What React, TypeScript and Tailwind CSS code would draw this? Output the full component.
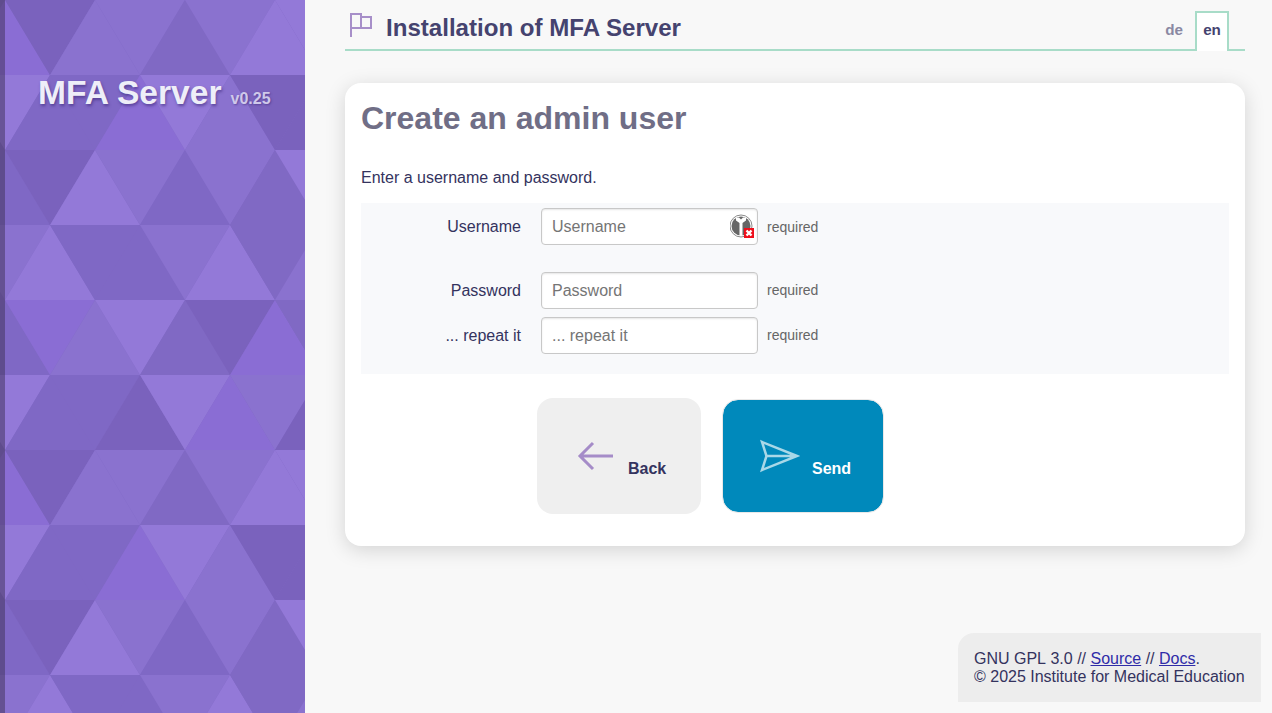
import React from 'react'

const FONT = "font-['Liberation_Sans',Arial,sans-serif]"

// colours of the background triangles
const A = '#7a62bd'
const B = '#7f68c5'
const C = '#8a72cf'
const D = '#9379d8'
const E = '#8a6dd4'
const F = '#8069c4'

// every row runs left to right, first triangle starts left of the page
const rows: string[][] = [
  [E, A, C, C, F, C, D, D],
  [D, B, B, E, D, C, A, A],
  [B, A, D, C, B, C, F, D],
  [C, D, B, B, C, D, F, C],
  [B, E, C, D, F, A, E, F],
  [D, B, B, A, D, E, C, A],
]

function triangles(offset: number) {
  const out: React.ReactNode[] = []
  rows.forEach((row, r) => {
    const top = offset + r * 75
    const bottom = top + 75
    const shift = r % 2 === 0 ? 5 : -40
    row.forEach((color, i) => {
      const n = Math.floor(i / 2)
      const x = shift + n * 90
      // even rows begin with an upward triangle, odd rows with a downward one
      const up = r % 2 === 0 ? i % 2 === 0 : i % 2 === 1
      let points = ''
      if (r % 2 === 0) {
        points = up
          ? `${x},${top} ${x - 45},${bottom} ${x + 45},${bottom}`
          : `${x},${top} ${x + 90},${top} ${x + 45},${bottom}`
      } else {
        points = up
          ? `${x + 90},${top} ${x + 45},${bottom} ${x + 135},${bottom}`
          : `${x},${top} ${x + 90},${top} ${x + 45},${bottom}`
      }
      out.push(<polygon key={`${offset}-${r}-${i}`} points={points} fill={color} />)
    })
  })
  return out
}

const Sidebar = () => (
  <aside className="relative w-[305px] h-full shrink-0 overflow-hidden bg-[#8069c4]">
    <svg className="absolute inset-0" width="305" height="713" viewBox="0 0 305 713">
      {triangles(0)}
      {triangles(450)}
      <rect x="0" y="0" width="5" height="713" fill="#3d2f55" fillOpacity="0.5" />
    </svg>
    <div className="relative flex items-baseline pl-[38px] pt-[72px] [font-kerning:normal]">
      <span className="text-[33.6px] leading-[42px] font-bold text-[#eeeef8] [text-shadow:1px_2px_3px_rgba(60,40,120,0.6)]">MFA Server</span>
      <span className="ml-[9px] text-[16px] font-bold text-[#cfc8ea] [text-shadow:1px_1px_2px_rgba(60,40,120,0.5)]">v0.25</span>
    </div>
  </aside>
)

const FlagIcon = () => (
  <svg width="24" height="26" viewBox="0 0 24 26" fill="none" stroke="#a78fc9" strokeWidth="2" className="-mt-[2px]">
    <path d="M2 1v24M2 2h10v14H2M12 5h10v11H12" />
  </svg>
)

const Header = () => (
  <header className="flex items-end h-[51px] border-b-2 border-[#a8dcc8]">
    <div className="flex items-center h-[49px] pl-[4px] pt-[2px]">
      <FlagIcon />
      <h2 className="ml-[13px] mt-[4px] text-[24.1px] leading-[30px] font-bold text-[#45436f] [font-kerning:normal]">Installation of MFA Server</h2>
    </div>
    <nav className="ml-auto mr-[16px] flex items-end -mb-[2px]">
      <span className="mr-[12px] pb-[12px] text-[15.2px] leading-[18px] font-bold text-[#8a89a3]">de</span>
      <span className="w-[34px] h-[40px] pt-[8px] text-center border-2 border-b-0 border-[#a8dcc8] bg-white text-[15.2px] leading-[18px] font-bold text-[#45436f]">en</span>
    </nav>
  </header>
)

const KeyBadge = () => (
  <svg width="26" height="28" viewBox="0 0 26 28" className="absolute right-[2px] top-[3px]">
    <circle cx="11" cy="15" r="11" fill="#fff" stroke="#8a8a8a" strokeWidth="1" />
    <circle cx="11" cy="15" r="9.5" fill="#666" />
    <path d="M6 6.5h3l2 2 2-2h3v3l-3.5 2.5V25h-3V12L6 9.5z" fill="#fff" />
    <rect x="14" y="17" width="10" height="10" fill="#ee0f1c" />
    <path d="M16.5 19.5l5 5M21.5 19.5l-5 5" stroke="#fff" strokeWidth="2.4" />
  </svg>
)

const Field = ({ label, badge, className }: { label: string; badge?: boolean; className?: string }) => (
  <div className={`flex items-center h-[37px] ${className ?? ''}`}>
    <label className="w-[160px] text-right text-[16px] text-[#34335e]">{label}</label>
    <div className="relative ml-[20px] w-[217px] h-[37px]">
      <input
        placeholder={label}
        className="w-full h-full px-[10px] rounded-[4px] border border-[#c8c8c8] bg-white text-[16px] shadow-[inset_0_1px_2px_rgba(0,0,0,0.1)] outline-none placeholder:text-[#757575]"
      />
      {badge && <KeyBadge />}
    </div>
    <span className={`ml-[9px] text-[14px] text-[#666] ${badge ? 'mt-[2px]' : ''}`}>required</span>
  </div>
)

const Buttons = () => (
  <div className="flex items-center mt-[24px] ml-[176px] h-[116px]">
    <button className="flex items-center pl-[40px] w-[164px] h-[116px] rounded-[16px] bg-[#efefef]">
      <svg width="38" height="30" viewBox="0 0 38 30" fill="none" stroke="#a58cc8" strokeWidth="3" className="-mt-[1px]">
        <path d="M36 15H3M16 2L3 15l13 13" />
      </svg>
      <span className="ml-[13px] mt-[26px] text-[16px] font-bold text-[#34335e]">Back</span>
    </button>
    <button className="flex items-center pl-[37px] ml-[21px] w-[162px] h-[114px] rounded-[16px] border border-[#e8e8e8] bg-[#0089bb] bg-clip-padding">
      <svg width="42" height="34" viewBox="0 0 42 34" fill="none" stroke="#a8d8e8" strokeWidth="2.5" className="-mt-[1px] -ml-[1px]">
        <path d="M38 17L3 3l4.5 14L3 31zM7.5 17H38" />
      </svg>
      <span className="ml-[11px] mt-[26px] text-[16px] font-bold text-white">Send</span>
    </button>
  </div>
)

const Card = () => (
  <section className="mt-[32px] h-[463px] px-[16px] pt-[16px] rounded-[16px] bg-white shadow-[0_4px_20px_rgba(0,0,0,0.15)]">
    <h1 className="text-[32px] leading-[38px] font-bold text-[#706e86]">Create an admin user</h1>
    <p className="mt-[32px] text-[16px] leading-[18px] text-[#34335e]">Enter a username and password.</p>
    <div className="mt-[16px] h-[171px] pt-[5px] bg-[#f8f9fb]">
      <Field label="Username" badge />
      <Field label="Password" className="mt-[27px]" />
      <Field label="... repeat it" className="mt-[8px]" />
    </div>
    <Buttons />
  </section>
)

const Footer = () => (
  <footer className="mt-auto self-end mr-[11px] mb-[11px] w-[303px] h-[69px] pl-[16px] pt-[17px] rounded-tl-[16px] bg-[#ededed] text-[16px] leading-[18px] text-[#34335e]">
    GNU GPL 3.0 // <a href="#" className="underline text-[#2f2ca8]">Source</a> // <a href="#" className="underline text-[#2f2ca8]">Docs</a>.
    <br />
    © 2025 Institute for Medical Education
  </footer>
)

export default function App() {
  return (
    <div className={`flex h-[713px] overflow-hidden bg-[#f8f8f8] [font-kerning:none] ${FONT}`}>
      <Sidebar />
      <main className="flex flex-col flex-1 min-w-0">
        <div className="ml-[40px] mr-[27px]">
          <Header />
          <Card />
        </div>
        <Footer />
      </main>
    </div>
  )
}
